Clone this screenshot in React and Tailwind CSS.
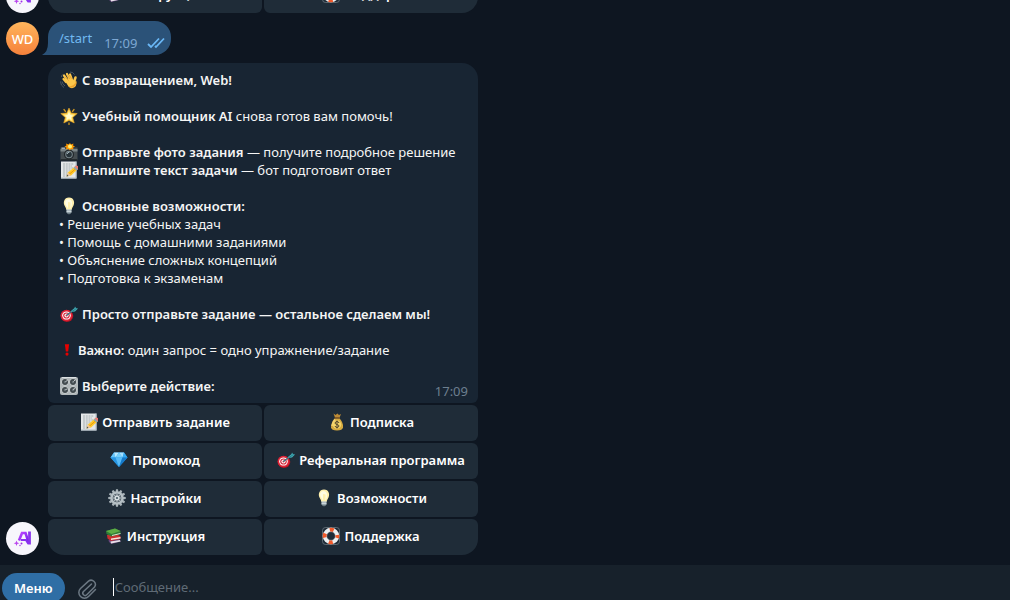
import React from "react";

const Svg = ({ children, className = "w-[18px]" }) => (
  <svg viewBox="0 0 36 36" preserveAspectRatio="xMidYMid meet" aria-hidden="true" className={`h-[18px] shrink-0 ${className}`}>
    {children}
  </svg>
);

const Wave = () => (
  <Svg>
    <path d="M12 22L7 16M15 19L8 9M19 16L14 6M23 15L20 7" fill="none" stroke="#fcc64a" strokeWidth="4.400" strokeLinecap="round" />
    <path d="M28 22L31 13" fill="none" stroke="#fcc64a" strokeWidth="5" strokeLinecap="round" />
    <path d="M10 20l12-8 6 7 4 2q2 7-2 11-7 5-13-1z" fill="#fcc64a" />
    <path d="M16 31q7 4 13 0 5-4 4-12-2 7-6 9-5 3-11 3z" fill="#eba12b" />
    <path d="M11 12l6 7M15 9l5 7M19 9l4 6" fill="none" stroke="#d18d22" strokeWidth="1.200" />
    <path d="M1 21q0 8 7 12M4 21q1 5 6 9M20 2q6 0 9 5M3 12q0-3 2-5" fill="none" stroke="#66717a" strokeWidth="1.300" />
  </Svg>
);

const Star = () => (
  <Svg>
    <path d="M8 5l3 4M28 5l-3 4M18 35v-3" stroke="#c99422" strokeWidth="2.600" strokeLinecap="round" />
    <path d="M18 2l4.500 10 12 1-9 8 3 11L18 27 7.500 32l3-11-9-8 12-1z" fill="#fbc337" strokeLinejoin="round" stroke="#f0ac28" strokeWidth="1" />
    <path d="M18 6l4 8 8 1-6 6 1 8-7-4-7 4 1-8-6-6 8-1z" fill="#ffe57a" />
    <path d="M18 10l3 6 5 1-4 4 1 5-5-3-5 3 1-5-4-4 5-1z" fill="#fffacb" />
  </Svg>
);

const Camera = () => (
  <Svg>
    <path d="M1 9h9l3-3h12l3 3h7v25H1z" fill="#454d50" />
    <path d="M1 12h34v5H1z" fill="#7b8587" />
    <path d="M1 32h34v3H1z" fill="#252c2f" />
    <path d="M3 9h7v3H3z" fill="#a6aeb0" />
    <circle cx="18" cy="23" r="10" fill="#202629" />
    <circle cx="18" cy="23" r="7.500" fill="#78868b" />
    <circle cx="18" cy="23" r="5.500" fill="#263238" />
    <path d="M14 22q1-4 5-4" fill="none" stroke="#b9cbd1" strokeWidth="2" />
    <path d="M20 0l2 3 5-2-1 4 4 2-4 2 1 4-5-1-2 3-3-3-5 1 1-4-4-2 4-2-1-4 5 2z" fill="#ff9800" />
    <circle cx="20" cy="7" r="4" fill="#fff176" />
  </Svg>
);

const Memo = () => (
  <Svg>
    <path d="M2 1h31v34H2z" fill="#e4e7e8" />
    <path d="M2 33h31v2H2zM31 1h2v34h-2z" fill="#b0bec5" />
    <path d="M6 6h21M6 10h18M6 14h21M6 18h15M6 22h12M6 26h8M6 30h6" stroke="#929b9f" strokeWidth="1.500" strokeDasharray="4 1.500" />
    <path d="M13 31l3-8 14-12 6 5-14 13z" fill="#ffc928" />
    <path d="M18 27l15-13" stroke="#e89a12" strokeWidth="2" />
    <path d="M29 12l3-3 4 1v7z" fill="#ef7770" />
    <path d="M27 14l3-3 6 6-3 2z" fill="#90a4ae" />
    <path d="M13 31l3-8 6 6z" fill="#efc79b" />
    <path d="M13 31l1-4 3 3z" fill="#37474f" />
  </Svg>
);

const Bulb = () => (
  <Svg>
    <path d="M18 1C8 1 6 11 9 17q3 5 4 9h10q1-4 4-9C30 11 28 1 18 1z" fill="#fff0ae" />
    <path d="M17 4c-6 0-8 6-6 11l5 8V10l5 1v13q4-9 3-14-2-6-7-6z" fill="#fffce2" />
    <path d="M13 25h10v6l-3 3h-4l-3-3z" fill="#94a3aa" />
    <path d="M13 26h10M13 29h10" stroke="#dce5e8" strokeWidth="1.500" />
    <path d="M15 33h6l-2 2h-2z" fill="#46575f" />
  </Svg>
);

const Target = () => (
  <Svg>
    <ellipse cx="14" cy="22" rx="12.500" ry="12" fill="#a91422" />
    <ellipse cx="13" cy="21" rx="12" ry="11.500" fill="#dd2336" />
    <ellipse cx="13" cy="21" rx="8.600" ry="8.200" fill="#fff" />
    <ellipse cx="13" cy="21" rx="6.600" ry="6.200" fill="#d42a3c" />
    <ellipse cx="13" cy="21" rx="4.200" ry="4" fill="#fff" />
    <circle cx="13" cy="21" r="2" fill="#d42a3c" />
    <path d="M13 21L27 10" stroke="#287b86" strokeWidth="2.200" />
    <path d="M22 12l7-6 1-3 2 3 4 1-6 6-7 1z" fill="#3fa9b3" />
    <path d="M24 13l9-6" stroke="#1c6872" strokeWidth="1.200" />
  </Svg>
);

const Exclaim = () => (
  <Svg className="w-[14px]">
    <path d="M12.500 3h11l-2.500 19h-6z" fill="#e60000" />
    <circle cx="18" cy="28.500" r="4" fill="#e60000" />
  </Svg>
);

const Knobs = () => (
  <Svg>
    <rect x="0" y="0" width="36" height="36" rx="4" fill="#b1b8ba" />
    <path d="M4 1h28" stroke="#dce1e3" strokeWidth="2" />
    {[[10, 10], [26, 10], [10, 26], [26, 26]].map(([x, y]) => (
      <g key={`${x}-${y}`}>
        <circle cx={x} cy={y} r="7" fill="#d5dadb" />
        <circle cx={x} cy={y} r="6" fill="#414a4e" />
        <circle cx={x} cy={y} r="2.500" fill="#667075" />
      </g>
    ))}
    <path d="M11 9l4-2M27 9l3-3M11 25l4-1M26 25l4-2" stroke="#e6eaec" strokeWidth="1.600" />
  </Svg>
);

const Money = () => (
  <Svg>
    <path d="M11 1l4 3 4-3 3 3 4-2-4 10h-7z" fill="#bd8b36" />
    <path d="M14 10h8q9 8 8 19-1 6-12 6T6 29q0-11 8-19z" fill="#d6aa3f" />
    <path d="M14 13q-5 6-6 13" fill="none" stroke="#f3d477" strokeWidth="3" />
    <path d="M13 10h10" stroke="#6e4b27" strokeWidth="3" />
    <circle cx="18" cy="23" r="8.500" fill="#f5d568" />
    <path d="M22 20q-1-3-4-3t-4 3q0 2 4 3t4 3q-1 3-4 3t-4-3M18 15v16" fill="none" stroke="#55472c" strokeWidth="2" />
  </Svg>
);

const Gem = () => (
  <Svg>
    <path d="M8 3h20l7 10-17 19L1 13z" fill="#2599e9" />
    <path d="M8 3l3 10H1z" fill="#67c6fb" />
    <path d="M8 3h10l-7 10z" fill="#b9eaff" />
    <path d="M18 3l7 10H11z" fill="#76cff9" />
    <path d="M18 3h10l-3 10z" fill="#a5e0ff" />
    <path d="M28 3l7 10H25z" fill="#36a9ef" />
    <path d="M1 13h10l7 19z" fill="#2896e2" />
    <path d="M11 13h14l-7 19z" fill="#58bbf7" />
    <path d="M25 13h10L18 32z" fill="#1679c9" />
  </Svg>
);

const Gear = () => (
  <Svg>
    {[0, 30, 60, 90, 120, 150, 180, 210, 240, 270, 300, 330].map((a) => (
      <path key={a} d="M15 7l1-6.500h4l1 6.500z" fill="#a9b3b8" transform={`rotate(${a} 18 18)`} />
    ))}
    <circle cx="18" cy="18" r="11" fill="none" stroke="#b5bfc4" strokeWidth="5" />
    <circle cx="18" cy="18" r="8" fill="#6e7b82" />
    <path d="M18 9v18M9 18h18M12 12l12 12M24 12L12 24" stroke="#a6b0b6" strokeWidth="2" />
    <circle cx="18" cy="18" r="5" fill="#d8dfe2" />
    <circle cx="18" cy="18" r="2.200" fill="#455a64" />
  </Svg>
);

const Books = () => (
  <Svg>
    <path d="M7 26l20-3 5 6-19 5-5-4z" fill="#66457b" />
    <path d="M11 29l19-3 1 3-19 4z" fill="#e8e2e8" />
    <path d="M4 16l17-2 10 4v6l-19 4-7-5z" fill="#c9302f" />
    <path d="M12 23l19-3v3l-19 3z" fill="#f2e5dd" />
    <path d="M2 8l18-5 11 5v6l-18 5-10-5z" fill="#2f7d36" />
    <path d="M2 8l18-5 11 5-18 6z" fill="#5dad45" />
    <path d="M14 16l17-4v2l-17 4z" fill="#dde5cf" />
  </Svg>
);

const Buoy = () => (
  <Svg>
    <rect x="1" y="1" width="34" height="34" rx="6" fill="none" stroke="#7d898f" strokeWidth="1.300" />
    <circle cx="18" cy="18" r="12.500" fill="none" stroke="#eceff1" strokeWidth="8" />
    <circle cx="18" cy="18" r="12.500" fill="none" stroke="#f1592a" strokeWidth="8" strokeDasharray="8 11.635" strokeDashoffset="4" />
    <circle cx="18" cy="18" r="8.500" fill="none" stroke="#9ca5a8" strokeWidth="1" />
  </Svg>
);

const BotAvatar = () => (
  <div className="flex size-[33px] shrink-0 items-center justify-center rounded-full bg-[#f7f6fc]">
    <svg viewBox="0 0 33 33" className="size-[33px]" role="img" aria-label="AI">
      <defs>
        <linearGradient id="violet" x1="0" y1="0" x2="1" y2="1">
          <stop offset="0" stopColor="#bd48ff" />
          <stop offset="1" stopColor="#741cec" />
        </linearGradient>
      </defs>
      <path d="M13 18.500L16 11h3.500l3 9" fill="none" stroke="url(#violet)" strokeWidth="2.600" />
      <path d="M23.500 9.500v13" fill="none" stroke="#8a35ed" strokeWidth="2.800" />
      <path d="M15 18h5l2.500 4" fill="none" stroke="#8931f0" strokeWidth="2.200" />
      <path d="M10.500 18.500l.8 2 2 .8-2 .8-.8 2-.8-2-2-.8 2-.8z" fill="#ba46ee" />
      <circle cx="15.500" cy="21.500" r="1" fill="#a12ee9" />
      <circle cx="14" cy="23.500" r="0.700" fill="#a12ee9" />
    </svg>
  </div>
);

const Line = ({ icon, children }) => (
  <p className={icon ? "flex min-h-[18px] items-center gap-1 pl-px" : "min-h-[18px]"}>
    {icon}
    <span>{children}</span>
  </p>
);

const B = ({ children }) => <strong className="font-semibold">{children}</strong>;

const Key = ({ icon, children, className = "rounded-md" }) => (
  <button type="button" className={`flex h-9 min-w-0 items-center justify-center gap-1 bg-[#1f2c38] pb-0.5 font-semibold whitespace-nowrap text-white ${className}`}>
    {icon}
    <span>{children}</span>
  </button>
);

const LastKeys = () => (
  <>
    <Key icon={<Books />} className="rounded-md rounded-bl-2xl">Инструкция</Key>
    <Key icon={<Buoy />} className="rounded-md rounded-br-2xl">Поддержка</Key>
  </>
);

const Row = ({ avatar, children }) => (
  <div className="flex shrink-0 items-end gap-[9px]">
    {avatar}
    {children}
  </div>
);

export default function App() {
  return (
    <div className="flex h-screen flex-col overflow-hidden bg-[#0e1621] font-['Noto_Sans','Open_Sans',sans-serif] text-[13px] leading-[18px] text-[#f5f5f5]">
      <main className="flex min-h-0 flex-1 flex-col justify-end gap-2 overflow-hidden px-1.5 pb-2.5">
        <Row avatar={<BotAvatar />}>
          <div className="grid w-full max-w-[430px] grid-cols-2 gap-0.5">
            <LastKeys />
          </div>
        </Row>

        <Row
          avatar={
            <div className="flex size-[33px] shrink-0 items-center justify-center rounded-full bg-linear-to-b from-[#ffb55c] to-[#f5813b] font-medium text-white">
              WD
            </div>
          }
        >
          <div className="relative flex h-[34px] items-center rounded-2xl rounded-bl-none bg-[#2b5278] pr-1.5 pl-[11px]">
            <svg viewBox="0 0 6 12" className="absolute bottom-0 -left-1.5 h-3 w-1.5" aria-hidden="true">
              <path d="M6 0v12H0Q6 9 6 0z" fill="#2b5278" />
            </svg>
            <a href="#start" className="text-[#71baf2]">/start</a>
            <time className="mt-2.5 ml-3 text-[#7da8d3]">17:09</time>
            <svg viewBox="0 0 18 12" className="mt-2.5 ml-2.5 h-3 w-[18px]" fill="none" stroke="#6ab8f7" strokeWidth="1.800" aria-hidden="true">
              <path d="M1 7l3 3L12 1.500M8 9l1 1L17 1.500" />
            </svg>
          </div>
        </Row>

        <Row avatar={<BotAvatar />}>
          <div className="flex w-full max-w-[430px] flex-col gap-0.5">
            <article className="relative rounded-t-2xl rounded-b-md bg-[#182533] px-[11px] py-2">
              <Line icon={<Wave />}><B>С возвращением, Web!</B></Line>
              <Line />
              <Line icon={<Star />}><B>Учебный помощник AI</B> снова готов вам помочь!</Line>
              <Line />
              <Line icon={<Camera />}><B>Отправьте фото задания</B> — получите подробное решение</Line>
              <Line icon={<Memo />}><B>Напишите текст задачи</B> — бот подготовит ответ</Line>
              <Line />
              <Line icon={<Bulb />}><B>Основные возможности:</B></Line>
              <Line>• Решение учебных задач</Line>
              <Line>• Помощь с домашними заданиями</Line>
              <Line>• Объяснение сложных концепций</Line>
              <Line>• Подготовка к экзаменам</Line>
              <Line />
              <Line icon={<Target />}><B>Просто отправьте задание — остальное сделаем мы!</B></Line>
              <Line />
              <Line icon={<Exclaim />}><B>Важно:</B> один запрос = одно упражнение/задание</Line>
              <Line />
              <Line icon={<Knobs />}><B>Выберите действие:</B></Line>
              <time className="absolute right-2.5 bottom-[3px] text-[#6d7f8f]">17:09</time>
            </article>
            <div className="grid grid-cols-2 gap-0.5">
              <Key icon={<Memo />}>Отправить задание</Key>
              <Key icon={<Money />}>Подписка</Key>
              <Key icon={<Gem />}>Промокод</Key>
              <Key icon={<Target />}>Реферальная программа</Key>
              <Key icon={<Gear />}>Настройки</Key>
              <Key icon={<Bulb />}>Возможности</Key>
              <LastKeys />
            </div>
          </div>
        </Row>
      </main>

      <footer className="flex h-[35px] shrink-0 items-start overflow-hidden bg-[#17212b] pt-2 pl-0.5">
        <button type="button" className="h-[30px] shrink-0 rounded-full bg-[#2f6ea5] px-3 font-semibold text-white">Меню</button>
        <button type="button" aria-label="Прикрепить файл" className="ml-3 shrink-0 pt-1">
          <svg viewBox="0 0 22 24" className="h-6 w-[22px]" fill="none" stroke="#6c7883" strokeWidth="1.500" strokeLinecap="round" aria-hidden="true">
            <path d="M14.500 7L6.500 14.500a2.300 2.300 0 0 0 3.300 3.300l7.700-7.700a4.300 4.300 0 0 0-6-6L3.500 11.500a5.500 5.500 0 0 0 8 8L18.500 12.500" />
          </svg>
        </button>
        <input
          aria-label="Сообщение"
          placeholder="Сообщение..."
          className="mt-[5px] ml-3.5 h-[18px] min-w-0 flex-1 border-l border-white bg-transparent pl-px text-white outline-none placeholder:text-[#5f6b76]"
        />
      </footer>
    </div>
  );
}
